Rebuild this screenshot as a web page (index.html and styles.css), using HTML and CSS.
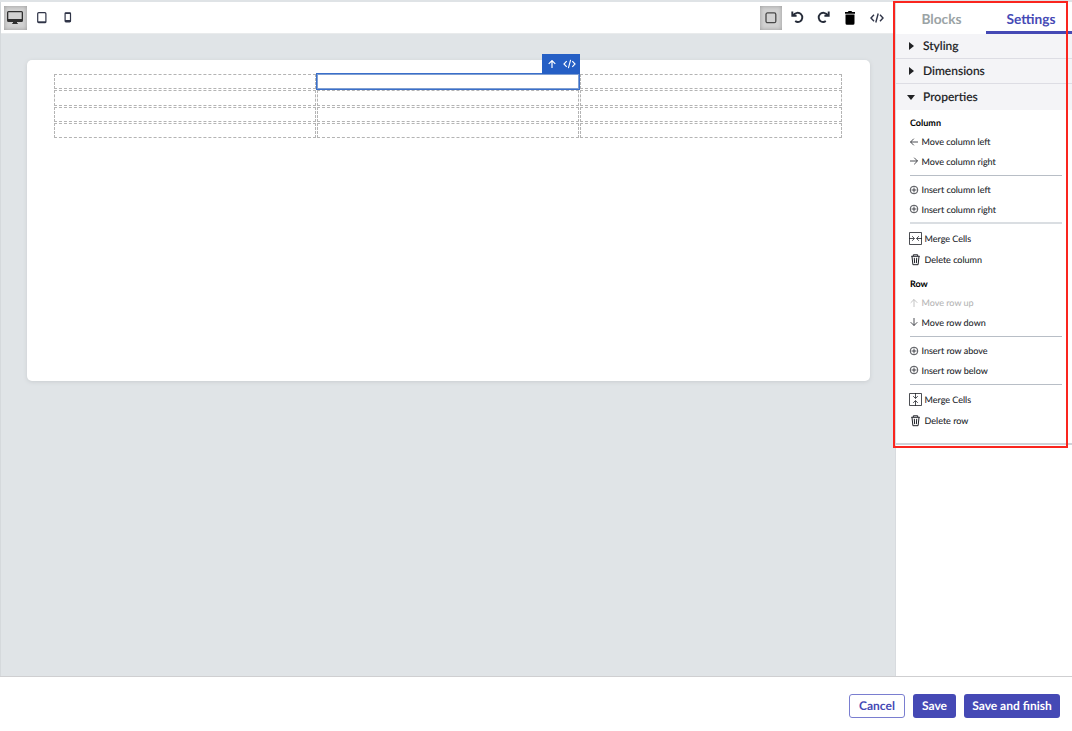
FILE: index.html
```
<!DOCTYPE html>
<html lang="en">
<head>
<meta charset="utf-8">
<title>Template editor</title>
<link rel="stylesheet" href="styles.css">
</head>
<body>
<svg class="defs" width="0" height="0" aria-hidden="true">
  <symbol id="arrow" viewBox="0 0 10 10"><path d="M9 5H1.500M4.800 1.700L1.500 5l3.300 3.300"/></symbol>
  <symbol id="plus" viewBox="0 0 10 10"><circle cx="5" cy="5" r="3.800"/><path d="M5 2.500v5M2.500 5h5"/></symbol>
  <symbol id="merge" viewBox="0 0 13 13"><path d="M.5 .5h12v12H.5zM0 6.500h5.300M3.200 4.200l2.200 2.300-2.200 2.300M13 6.500H7.700M9.800 4.200L7.600 6.500l2.200 2.300"/></symbol>
  <symbol id="bin" viewBox="0 0 10 12"><path d="M.7 2.300h8.600M2.800 2V.8h4.400V2M1.500 2.500l.9 8.200h5.200l.9-8.200M3.800 3.800l.3 5.300M6.200 3.800L5.900 9.100"/></symbol>
  <symbol id="code" viewBox="0 0 14 10"><path d="M4 1.800L1 5l3 3.200M10 1.800L13 5l-3 3.200M8.200 .5l-2.400 9"/></symbol>
</svg>
<div class="app">
  <main class="workspace">
    <header class="toolbar">
      <div class="tools devices">
        <button class="tool active"><svg width="16" height="14" viewBox="0 0 16 14"><path d="M1.500 0h13Q16 0 16 1.500v8q0 1.500-1.500 1.500H10v1.200h1V13H5v-.8h1V11H1.500Q0 11 0 9.500v-8Q0 0 1.500 0zM1.300 1.300v6.700h13.400V1.300z" fill="#303030" fill-rule="evenodd"/></svg></button>
        <button class="tool"><svg width="10" height="12" viewBox="0 0 10 12"><rect x=".7" y=".7" width="8.200" height="10" rx="1" fill="none" stroke="#303548" stroke-width="1.200"/><path d="M1 9.300h8v1.500H1z" fill="#303548"/></svg></button>
        <button class="tool"><svg width="8" height="11" viewBox="0 0 8 11"><rect x="1.100" y=".8" width="5.400" height="9" rx=".8" fill="none" stroke="#303548" stroke-width="1.200"/><path d="M1 .7h5.600v1.300H1zM1 8h5.600v2H1z" fill="#303548"/></svg></button>
      </div>
      <div class="tools actions">
        <button class="tool active"><svg width="12" height="12" viewBox="0 0 12 12"><rect x="1" y=".9" width="9.800" height="9.800" rx="1.500" fill="none" stroke="#484848" stroke-width="1.300"/></svg></button>
        <button class="tool"><svg width="13" height="13" viewBox="0 0 13 13"><path d="M1.300 .5V4.700H5.600M2 4.500C4 1.300 8 1 10 3.200c2.200 2.300 1.500 6-1 7.300-1.600.8-3.500.6-4.800-.4" fill="none" stroke="#252b38" stroke-width="1.900"/></svg></button>
        <button class="tool"><svg width="13" height="13" viewBox="0 0 13 13"><path d="M11.700 .5V4.700H7.400M11 4.500C9 1.300 5 1 3 3.200c-2.200 2.300-1.500 6 1 7.300 1.600.8 3.500.6 4.800-.4" fill="none" stroke="#252b38" stroke-width="1.900"/></svg></button>
        <button class="tool"><svg width="12" height="14" viewBox="0 0 12 14"><path d="M1 1h2.800l.8-1h2.800l.8 1H11v1.800H1zM1.500 3.600h9v8.700q0 1.500-1.500 1.500H3q-1.500 0-1.500-1.500z"/></svg></button>
        <button class="tool"><svg class="stroke code" width="14" height="10"><use href="#code"/></svg></button>
      </div>
    </header>
    <div class="stage">
      <section class="page">
        <div class="grid">
          <div class="cell"></div>
          <div class="cell selected">
            <div class="badge"><svg class="stroke" width="10" height="10"><use href="#arrow" transform="rotate(90 5 5)"/></svg><svg class="stroke" width="13" height="10"><use href="#code"/></svg></div>
          </div>
          <div class="cell"></div>
          <div class="cell"></div><div class="cell"></div><div class="cell"></div>
          <div class="cell"></div><div class="cell"></div><div class="cell"></div>
          <div class="cell"></div><div class="cell"></div><div class="cell"></div>
        </div>
      </section>
    </div>
  </main>
  <aside class="sidebar">
    <nav class="tabs"><div class="tab">Blocks</div><div class="tab current">Settings</div></nav>
    <div class="sector"><i class="caret"></i>Styling</div>
    <div class="sector"><i class="caret"></i>Dimensions</div>
    <div class="sector open"><i class="caret"></i>Properties</div>
    <div class="props">
      <h3>Column</h3>
      <div class="item"><svg class="stroke" width="10" height="10"><use href="#arrow"/></svg>Move column left</div>
      <div class="item"><svg class="stroke" width="10" height="10"><use href="#arrow" transform="rotate(180 5 5)"/></svg>Move column right</div>
      <hr>
      <div class="item"><svg class="stroke" width="10" height="10"><use href="#plus"/></svg>Insert column left</div>
      <div class="item"><svg class="stroke" width="10" height="10"><use href="#plus"/></svg>Insert column right</div>
      <hr class="soft">
      <div class="item wide"><svg class="stroke" width="13" height="13"><use href="#merge"/></svg>Merge Cells</div>
      <div class="item wide"><svg class="stroke bin" width="13" height="12" viewBox="-1.500 0 13 12"><use href="#bin" width="10" height="12"/></svg>Delete column</div>
      <h3 class="next">Row</h3>
      <div class="item disabled"><svg class="stroke" width="10" height="10"><use href="#arrow" transform="rotate(90 5 5)"/></svg>Move row up</div>
      <div class="item"><svg class="stroke" width="10" height="10"><use href="#arrow" transform="rotate(-90 5 5)"/></svg>Move row down</div>
      <hr>
      <div class="item"><svg class="stroke" width="10" height="10"><use href="#plus"/></svg>Insert row above</div>
      <div class="item"><svg class="stroke" width="10" height="10"><use href="#plus"/></svg>Insert row below</div>
      <hr>
      <div class="item wide"><svg class="stroke" width="13" height="13"><use href="#merge" transform="rotate(90 6.500 6.500)"/></svg>Merge Cells</div>
      <div class="item wide"><svg class="stroke bin" width="13" height="12" viewBox="-1.500 0 13 12"><use href="#bin" width="10" height="12"/></svg>Delete row</div>
    </div>
    <div class="highlight"></div>
  </aside>
</div>
<footer class="footer">
  <button class="btn outline">Cancel</button>
  <button class="btn save">Save</button>
  <button class="btn finish">Save and finish</button>
</footer>
</body>
</html>
```

FILE: styles.css
```
* { box-sizing: border-box; }
body { margin: 0; width: 1072px; height: 731px; overflow: hidden; background: #fff; font-family: Lato, sans-serif; color: #202124; display: flex; flex-direction: column; text-rendering: geometricPrecision; }
.defs { position: absolute; }
svg { display: block; flex: none; overflow: visible; }
button { font: inherit; border: 0; background: none; padding: 0; text-rendering: inherit; }
.stroke { fill: none; stroke: currentColor; stroke-width: .8; }
.app { display: flex; height: 677px; border-top: 2px solid #dfe3e6; border-bottom: 1px solid #cfcfd1; }
.workspace { width: 895px; display: flex; flex-direction: column; border-left: 1px solid #d5d9dc; }
.toolbar { height: 32px; background: #fff; display: flex; justify-content: space-between; padding: 4px 7px 0 3px; border-bottom: 1px solid #e9ebec; }
.tools { display: flex; gap: 4px; }
.tool { width: 22.500px; height: 24px; display: flex; align-items: center; justify-content: center; color: #303548; }
.tool.active { background: #d2d2d2; box-shadow: inset 0 0 4px #999; }
.actions svg, .devices .tool + .tool svg { margin-top: -1px; }
.code { stroke-width: 1.400; }
.stage { flex: 1; background: #e0e4e7; padding: 26px 25px 0 26px; }
.page { width: 843px; height: 321px; background: #fff; border-radius: 5px; box-shadow: 0 1px 4px #c9cdd0; padding: 14px 27px; }
.grid { display: grid; grid-template-columns: repeat(3, 262px); grid-template-rows: 15px 16px 15px 15px; gap: 1px; }
.cell { border: 1px dashed #b4b4b4; }
.cell.selected { position: relative; border: 1px solid #7f9fd2; outline: 1px solid #3a6fcb; }
.badge { position: absolute; right: -2px; top: -21px; width: 38px; height: 20px; background: #255fc5; color: #fff; display: flex; align-items: center; justify-content: space-between; padding: 0 4px 0 5px; }
.badge svg { stroke-width: 1.200; }
.sidebar { position: relative; width: 177px; background: #fff; border-left: 1px solid #d8dbdf; }
.tabs { display: flex; height: 32px; }
.tab { width: 90px; text-align: center; font-size: 13.700px; font-weight: 700; line-height: 34px; color: #9aa3a5; padding-left: 1px; }
.tab.current { width: 86px; color: #4549b5; border-bottom: 3px solid #4549b5; padding-left: 4px; }
.sector { height: 25px; background: #f4f4f7; border-bottom: 1px solid #dddde4; display: flex; align-items: center; padding-left: 14px; font-size: 12px; font-weight: 500; line-height: 24px; -webkit-text-stroke: .15px; }
.sector.open { height: 26px; border-bottom: 0; }
.caret { width: 13px; height: 8px; }
.caret::before { content: ""; display: block; width: 0; border: 4px solid transparent; border-left: 5px solid #202124; border-right: 0; margin-left: -1px; }
.open .caret::before { border: 4px solid transparent; border-top: 5px solid #202124; border-bottom: 0; margin: 2px 0 0 -3px; }
.props { height: 335px; padding: 3px 10px 0 14px; border-bottom: 2px solid #cfd3d9; }
h3 { margin: 0; height: 19px; line-height: 19px; font-size: 9px; font-weight: 700; color: #000; }
h3.next { margin-top: 4px; }
.item { height: 19.500px; display: flex; align-items: center; gap: 2.500px; font-size: 9px; white-space: nowrap; color: #202228; -webkit-text-stroke: .08px; }
.item svg { margin-left: -1px; }
.item.wide { height: 21px; }
.item.disabled { color: #b5b5b5; }
.bin { stroke-width: 1; }
hr { border: 0; height: 1px; background: #b8bec6; margin: 4px 0; }
hr.soft { height: 2px; background: #dadee2; margin-top: 3px; }
.highlight { position: absolute; left: -3px; top: -1px; width: 175px; height: 447px; border: 2px solid #fa251e; }
.footer { flex: 1; display: flex; gap: 8px; justify-content: flex-end; padding: 17px 12px 0 0; }
.btn { height: 24px; border-radius: 3px; background: #4549b5; color: #fff; font-size: 12px; font-weight: 700; line-height: 24px; white-space: nowrap; }
.outline { width: 56px; background: #fff; color: #4549b5; border: 1px solid #7a7ed0; line-height: 22px; }
.save { width: 43px; }
.finish { width: 96px; }
```
